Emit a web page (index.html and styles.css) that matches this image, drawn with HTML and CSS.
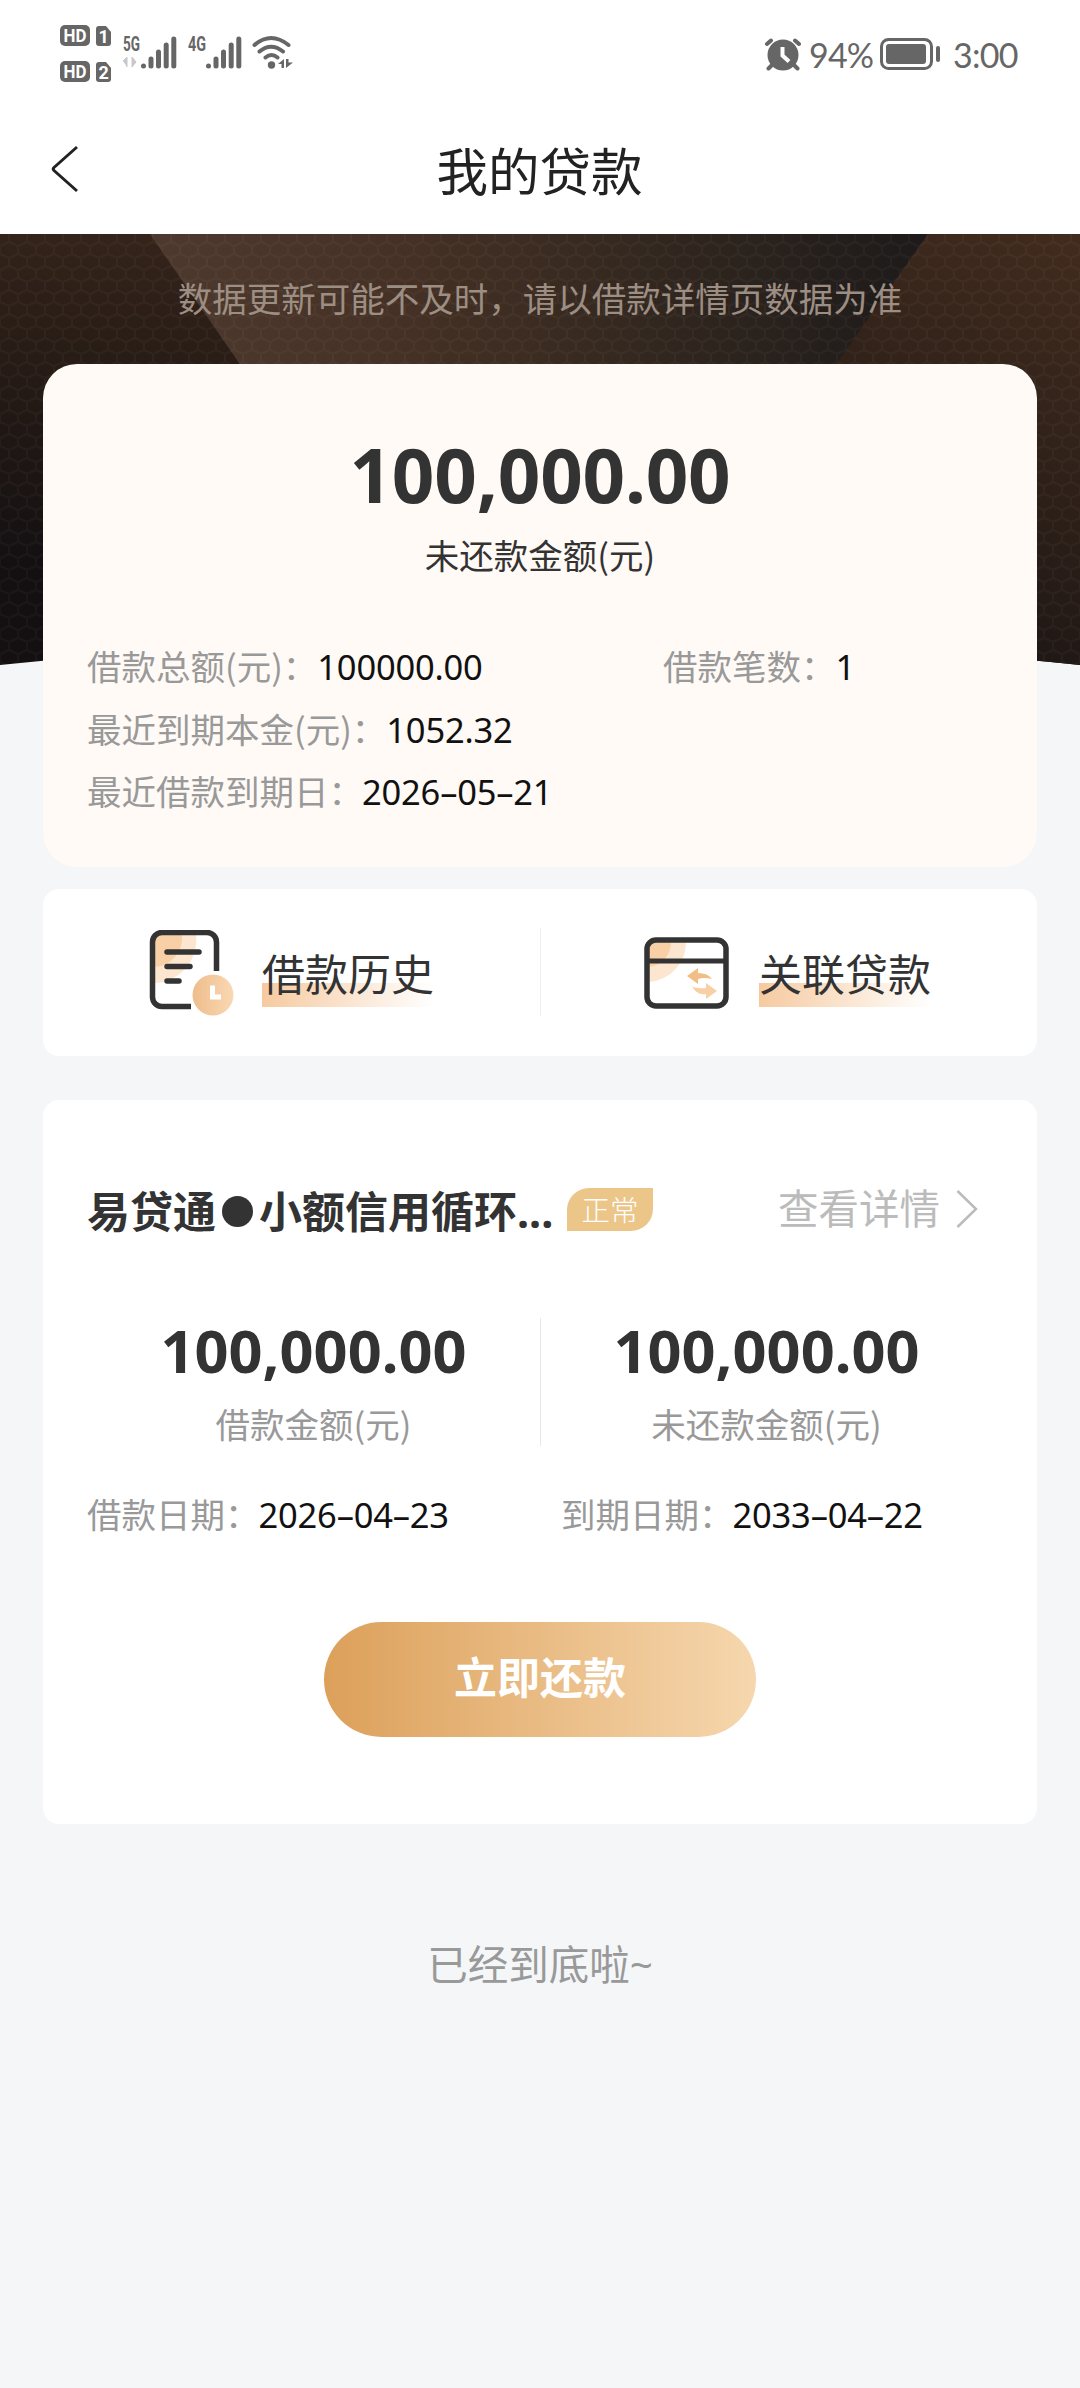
FILE: index.html
```html
<!DOCTYPE html>
<html lang="zh-CN">
<head>
<meta charset="utf-8">
<title>我的贷款</title>
<link rel="stylesheet" href="styles.css">
</head>
<body>
<div class="statusbar">
  <div class="status-left">
    <svg class="hd-icons" width="51" height="60" viewBox="0 0 51 60">
      <g fill="#666">
        <rect x="0" y="1" width="30" height="21" rx="5"/>
        <path d="M39 2h7l5 6v11a3 3 0 0 1-3 3h-9a3 3 0 0 1-3-3V5a3 3 0 0 1 3-3z"/>
        <rect x="0" y="37" width="30" height="21" rx="5"/>
        <path d="M39 38h7l5 6v11a3 3 0 0 1-3 3h-9a3 3 0 0 1-3-3V41a3 3 0 0 1 3-3z"/>
      </g>
      <g class="hd-text">
        <text x="3.5" y="18" textLength="23" lengthAdjust="spacingAndGlyphs">HD</text>
        <text x="38.5" y="18.5" textLength="9">1</text>
        <text x="3.5" y="54" textLength="23" lengthAdjust="spacingAndGlyphs">HD</text>
        <text x="38.5" y="54.5" textLength="9">2</text>
      </g>
    </svg>
    <svg class="signal" width="54" height="44" viewBox="0 -8 54 44">
      <text class="net" x="0" y="16.5" textLength="17" lengthAdjust="spacingAndGlyphs">5G</text>
      <path d="M0 27l4-4v10M9 23v10l4-5z" fill="#c8c8c8" stroke="#c8c8c8"/>
      <g class="bars"><path d="M20.500 32v0M28 25v7M35.500 18v14M43.200 11v21M50.800 5v27"/></g>
    </svg>
    <svg class="signal signal-4g" width="54" height="44" viewBox="0 -8 54 44">
      <text class="net" x="0" y="16.5" textLength="18" lengthAdjust="spacingAndGlyphs">4G</text>
      <g class="bars"><path d="M20.500 32v0M28 25v7M35.500 18v14M43.200 11v21M50.800 5v27"/></g>
    </svg>
    <svg class="wifi" width="42" height="36" viewBox="0 0 42 36">
      <g fill="none" stroke="#666" stroke-width="4" stroke-linecap="round">
        <path d="M2.500 11Q19-3 36.500 11M7.500 17.500Q19 8 31 17.500M13.500 23.500Q19.500 18.500 25.500 23.500"/>
      </g>
      <circle cx="19.500" cy="31" r="3.700" fill="#666"/>
      <path d="M26 30l6-5v9h-2.500v-4zM34 25h2.500v3.500H41L34 34z" fill="#666"/>
    </svg>
  </div>
  <div class="status-right">
    <svg class="alarm" width="38" height="34" viewBox="0 0 38 34">
      <circle cx="19" cy="18" r="15.500" fill="#666"/>
      <path d="M3 7l4-3.500M35 7l-4-3.500M9 27l-4.500 4.500M29 27l4.500 4.500" stroke="#666" stroke-width="4" stroke-linecap="round"/>
      <path d="M18.500 10v8.500l6.500 6" fill="none" stroke="#fff" stroke-width="4"/>
    </svg>
    <span class="pct">94%</span>
    <svg class="battery" width="60" height="32" viewBox="0 0 60 32">
      <rect x="1.500" y="1.500" width="50" height="29" rx="7" fill="none" stroke="#666" stroke-width="3"/>
      <rect x="6" y="6" width="40" height="20" rx="3" fill="#666"/>
      <rect x="56" y="8" width="4" height="16" rx="2" fill="#666"/>
    </svg>
    <span class="clock">3:00</span>
  </div>
</div>
<header class="navbar">
  <svg class="back" width="30" height="48" viewBox="0 0 30 48"><path d="M27 2L4 22.500Q2.500 24 4 25.500L27 46" fill="none" stroke="#222" stroke-width="3"/></svg>
  <h1 class="title">我的贷款</h1>
</header>
<main class="page">
  <svg class="hero" width="1080" height="435" viewBox="0 0 1080 435">
    <defs>
      <linearGradient id="base" x1=".2" y1="0" x2="0" y2=".75"><stop offset="0" stop-color="#35241a"/><stop offset=".5" stop-color="#241a15"/><stop offset="1" stop-color="#141012"/></linearGradient>
      <linearGradient id="beam" x1="0" y1="0" x2="1" y2="0"><stop offset="0" stop-color="#4d392d"/><stop offset=".35" stop-color="#443024"/><stop offset=".65" stop-color="#32271f"/><stop offset="1" stop-color="#1d1a1a"/></linearGradient>
      <linearGradient id="side" x1="1" y1="0" x2=".6" y2="1"><stop offset="0" stop-color="#422b1e"/><stop offset=".5" stop-color="#2f2119"/><stop offset="1" stop-color="#1b1514"/></linearGradient>
      <pattern id="mesh" width="18" height="24" patternUnits="userSpaceOnUse"><path d="M9 0V8L0 12V20M9 8L18 12V20L9 24L0 20" fill="none" stroke="#fff" stroke-opacity=".03" stroke-width="2"/></pattern>
      <clipPath id="curve"><path d="M0 0H1080V431Q540 375 0 431Z"/></clipPath>
    </defs>
    <g clip-path="url(#curve)">
      <rect width="1080" height="435" fill="url(#base)"/>
      <path d="M928 0H1080V435H700V322Z" fill="url(#side)"/>
      <path d="M150 0H928L787 200H288Z" fill="url(#beam)"/>
      <rect width="1080" height="435" fill="url(#mesh)"/>
    </g>
  </svg>
  <p class="notice">数据更新可能不及时，请以借款详情页数据为准</p>
  <section class="summary">
    <div class="total">100,000.00</div>
    <div class="total-label">未还款金额(元)</div>
    <div class="fact-grid">
      <div class="fact"><span class="label">借款总额(元)：</span><span class="value">100000.00</span></div>
      <div class="fact"><span class="label">借款笔数：</span><span class="value">1</span></div>
      <div class="fact wide"><span class="label">最近到期本金(元)：</span><span class="value">1052.32</span></div>
      <div class="fact wide"><span class="label">最近借款到期日：</span><span class="value date">2026<i>–</i>05<i>–</i>21</span></div>
    </div>
  </section>
  <nav class="shortcuts">
    <a class="shortcut">
      <svg class="sc-icon" width="86" height="88" viewBox="0 0 86 88">
        <defs><linearGradient id="gold" x1="0" x2="1"><stop offset="0" stop-color="#eebd8b"/><stop offset="1" stop-color="#fad8b4"/></linearGradient></defs>
        <path d="M5 5H47A43 43 0 0 1 5 53Z" fill="#fde6cf"/>
        <path d="M5 5H33A29 29 0 0 1 5 37Z" fill="#f9cfa5"/>
        <path d="M42 76.500H13A9.500 9.500 0 0 1 3.500 67V12A9.500 9.500 0 0 1 13 2.500H58A9.500 9.500 0 0 1 67.500 12V41" fill="none" stroke="#333" stroke-width="5.500"/>
        <path d="M18 22H50M18 36.500H41M18 51H30" stroke="#333" stroke-width="5.500" stroke-linecap="round"/>
        <circle cx="64" cy="65" r="20.500" fill="url(#gold)"/>
        <path d="M63.500 55.500V67H72" fill="none" stroke="#fff" stroke-width="5"/>
      </svg>
      <span class="sc-text">借款历史</span>
    </a>
    <a class="shortcut second">
      <svg class="sc-icon" width="86" height="88" viewBox="0 0 86 88">
        <path d="M5 11H42A40 40 0 0 1 5 52Z" fill="#fde6cf"/>
        <path d="M5 11H27A25 25 0 0 1 5 37Z" fill="#f9cfa5"/>
        <rect x="3" y="10" width="79" height="66" rx="9" fill="none" stroke="#333" stroke-width="5.500"/>
        <path d="M3 31H82" stroke="#333" stroke-width="5"/>
        <path d="M43 46L54 38V43Q64 43 68 49Q61 47 54 49V54Z" fill="#f2be86"/>
        <path d="M73 61L62 53V58Q52 59 48 56Q53 66 62 64V69Z" fill="#f8d0a6"/>
      </svg>
      <span class="sc-text">关联贷款</span>
    </a>
  </nav>
  <section class="loan">
    <div class="loan-head">
      <h2 class="loan-name">易贷通<span class="dot"></span>小额信用循环<span class="ell">...</span></h2>
      <span class="badge">正常</span>
      <a class="detail"><span class="detail-text">查看详情</span><svg width="22" height="38" viewBox="0 0 22 38"><path d="M1.500 1L20 19L1.500 37" fill="none" stroke="#bbb" stroke-width="2.500"/></svg></a>
    </div>
    <div class="amounts">
      <div class="amount"><div class="num">100,000.00</div><div class="label">借款金额(元)</div></div>
      <div class="amount"><div class="num">100,000.00</div><div class="label">未还款金额(元)</div></div>
    </div>
    <div class="dates">
      <div class="fact"><span class="label">借款日期：</span><span class="value date">2026<i>–</i>04<i>–</i>23</span></div>
      <div class="fact"><span class="label">到期日期：</span><span class="value date">2033<i>–</i>04<i>–</i>22</span></div>
    </div>
    <button class="repay">立即还款</button>
  </section>
  <p class="end">已经到底啦~</p>
</main>
</body>
</html>
```
FILE: styles.css
```css
* { box-sizing: border-box; margin: 0; padding: 0; }
body {
  width: 1080px; height: 2388px; overflow: hidden;
  background: #f4f6f8; color: #333;
  font-family: "Noto Sans", "Noto Sans CJK SC", sans-serif;
  font-size: 34.5px;
}
svg { display: block; flex: none; }
.statusbar {
  height: 108px; background: #fff; color: #666;
  display: flex; justify-content: space-between; padding: 0 60px 0 60px;
}
.status-left { display: flex; padding-top: 24px; }
.hd-text { font: bold 18px Roboto, sans-serif; fill: #fff; }
.signal { margin: 2px 0 0 12px; }
.signal-4g { margin-left: 11px; }
.net { font: bold 20px Roboto, sans-serif; fill: #666; }
.bars { fill: none; stroke: #666; stroke-width: 5; stroke-linecap: round; }
.wifi { margin: 10px 0 0 10px; }
.status-right { display: flex; align-items: center; font-family: Lato, sans-serif; font-size: 34px; }
.alarm { margin-right: 7px; }
.pct { width: 64px; white-space: nowrap; letter-spacing: -.8px; }
.battery { margin: 0 13px 0 7px; }
.clock { width: 67px; white-space: nowrap; letter-spacing: -.7px; }
.navbar {
  height: 126px; background: #fff; display: grid;
  grid-template-columns: 1fr auto 1fr; align-items: start;
}
.back { margin: 37px 0 0 50px; }
.title { font-size: 51.5px; font-weight: 400; line-height: 76px; margin: 25px 1px 0 0; color: #222; }
.page { position: relative; padding: 0 43px; display: flex; flex-direction: column; }
.hero { position: absolute; left: 0; top: 0; z-index: -1; }
.notice { height: 130px; line-height: 50px; padding-top: 40px; text-align: center; color: #9d8e83; }
.summary { height: 503px; background: #fffaf5; border-radius: 34px; padding: 65px 44px 0; }
.total { font-size: 74.5px; font-weight: 700; line-height: 90px; text-align: center; letter-spacing: -.2px; }
.total-label { line-height: 50px; margin-top: 10px; text-align: center; font-family: "Noto Sans CJK SC", sans-serif; }
.fact-grid { display: grid; grid-template-columns: 576px 1fr; grid-auto-rows: 62.5px; margin-top: 55px; }
.wide { grid-column: 1 / -1; }
.fact { display: flex; align-items: baseline; white-space: nowrap; line-height: 62px; }
.label { color: #999; font-family: "Noto Sans CJK SC", sans-serif; }
.value { color: #111; letter-spacing: -.2px; }
.date { margin-left: -1px; }
.value i { font-style: normal; display: inline-block; width: 17px; text-align: center; }
.shortcuts {
  height: 167px; margin-top: 22px; background: #fff; border-radius: 16px;
  display: grid; grid-template-columns: 497px 1fr;
}
.shortcut { display: flex; align-items: flex-start; padding: 41px 0 0 106px; }
.second { position: relative; padding-left: 104px; }
.second::before {
  content: ""; position: absolute; left: 0; top: 39px; width: 1px; height: 88px; background: #eee;
}
.sc-text {
  margin: 12px 0 0 27px; width: 172px; height: 65px; font-size: 43px; line-height: 66px; white-space: nowrap;
  background: linear-gradient(90deg, #f6caa0, #fff) 0 100% / 100% 24px no-repeat;
}
.second .sc-text { margin-left: 29px; }
.loan { height: 724px; margin-top: 44px; background: #fff; border-radius: 16px; padding: 77px 44px 0; }
.loan-head { display: flex; align-items: center; height: 64px; }
.loan-name { font-size: 43px; font-weight: 700; white-space: nowrap; width: 480px; display: flex; align-items: center; line-height: 64px; padding-top: 5px; }
.dot { width: 31px; height: 31px; border-radius: 50%; background: #333; margin: -1px 6px 0; }
.badge {
  width: 86px; height: 43px; border-radius: 22px 0 22px 0; background: #ebc688; color: #fff;
  font-size: 28.5px; font-weight: 300; line-height: 45px; text-align: center;
}
.detail { margin-left: auto; margin-right: 15px; display: flex; align-items: center; gap: 16px; font-size: 40.5px; color: #bbb; white-space: nowrap; }
.detail-text { padding-bottom: 5px; }
.amounts { height: 128px; margin-top: 77px; display: flex; justify-content: space-between; position: relative; }
.amounts::after { content: ""; position: absolute; left: 453px; top: 0; width: 1px; height: 128px; background: #e8e8e8; }
.amount { width: 453px; text-align: center; }
.num { font-size: 59.5px; font-weight: 700; line-height: 64px; }
.amount .label { line-height: 50px; margin-top: 16px; }
.dates { display: grid; grid-template-columns: 474px 1fr; margin-top: 36px; }
.repay {
  display: block; width: 432px; height: 115px; margin: 76px auto 0; border: 0; border-radius: 58px;
  background: linear-gradient(90deg, #dca05a, #f6d7ae); color: #fff; padding-bottom: 10px;
  font: 700 43px/100px "Noto Sans CJK SC", sans-serif;
}
.end { margin-top: 111px; line-height: 60px; font-size: 40.5px; text-align: center; color: #999; }
```
